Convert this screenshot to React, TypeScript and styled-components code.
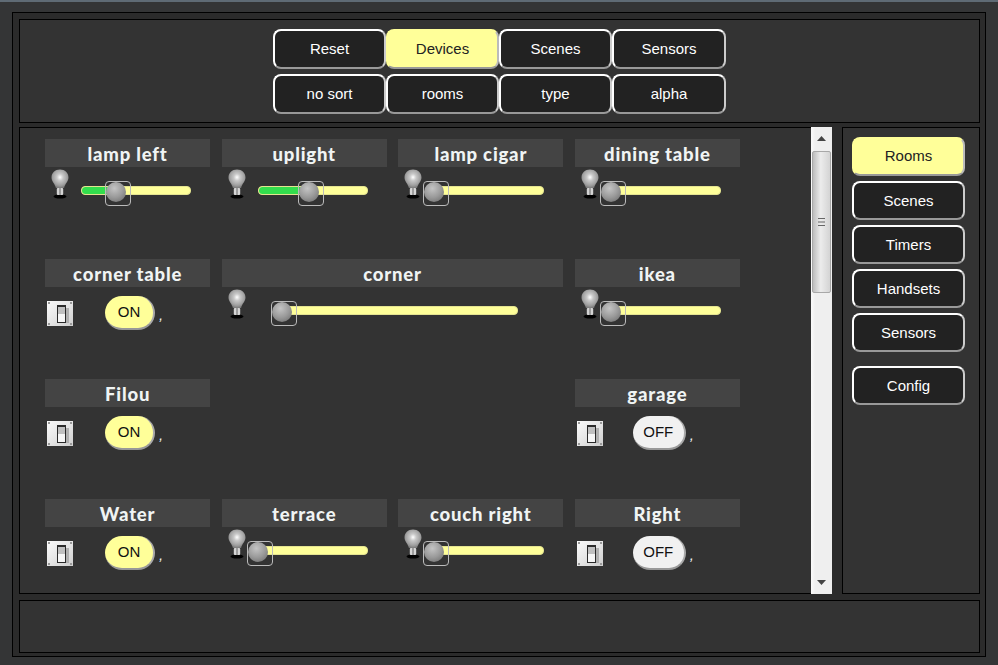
import React from "react";
import { createGlobalStyle, styled } from "styled-components";

const GlobalStyle = createGlobalStyle`
  html, body { margin: 0; padding: 0; background: #333; }
  * { box-sizing: border-box; }
`;

const Page = styled.div`
  width: 998px;
  height: 665px;
  padding: 10px 12px 0 12px;
  background: #343536;
  border-top: 2px solid #5f6b75;
  font-family: "Liberation Sans", Arial, sans-serif;
`;

const Frame = styled.div`
  width: 974px;
  height: 645px;
  padding: 6px 5px 3px 6px;
  background: #2b2b2b;
  border: 1px solid #000;
  display: flex;
  flex-direction: column;
`;

const Panel = styled.div`
  background: #333;
  border: 1px solid #000;
`;

const TopPanel = styled(Panel)`
  height: 104px;
  display: flex;
  justify-content: center;
  padding-top: 9px;
`;

const TopGrid = styled.div`
  display: grid;
  grid-template-columns: 113px 113px 113px 114px;
  grid-auto-rows: 40px;
  row-gap: 5px;
`;

const Btn = styled.button<{ $active?: boolean }>`
  display: block;
  height: 40px;
  padding: 0 0 ${(p) => (p.$active ? 2 : 0)}px 0;
  border-radius: 8px;
  border: 2px solid ${(p) => (p.$active ? "#ffff99" : "#fff")};
  border-bottom-color: #999;
  border-right-color: ${(p) => (p.$active ? "#bbb" : "#ccc")};
  background: ${(p) => (p.$active ? "#ffff99" : "#222")};
  color: ${(p) => (p.$active ? "#222" : "#fff")};
  font-family: "Liberation Sans", Arial, sans-serif;
  font-size: 15px;
`;

const TopBtn = styled(Btn)`
  padding-bottom: 2px;
`;

const Middle = styled.div`
  height: 467px;
  margin-top: 4px;
  display: flex;
  gap: 10px;
`;

const MainPanel = styled(Panel)`
  width: 813px;
  display: flex;
  border-right: none;
`;

const DeviceGrid = styled.div`
  flex: 1;
  padding: 11px 0 0 25px;
  display: grid;
  grid-template-columns: repeat(4, 165.25px);
  column-gap: 11.33px;
  grid-auto-rows: 120px;
`;

const Cell = styled.div<{ $span?: number }>`
  grid-column: span ${(p) => p.$span ?? 1};
`;

const Empty = styled.div`
  grid-column: span 2;
`;

const Label = styled.div`
  height: 28px;
  line-height: 30px;
  text-align: center;
  background: #444;
  color: #f0f4f4;
  font-family: "Comic Sans MS", "Lato", sans-serif;
  font-weight: 900;
  font-size: 18.5px;
  letter-spacing: 0.8px;
`;

const DimRow = styled.div`
  display: flex;
  padding: 2px 0 0 6px;
`;

const SliderBox = styled.div<{ $left: number; $width: number }>`
  position: relative;
  margin: 17px 0 0 ${(p) => p.$left}px;
  width: ${(p) => p.$width}px;
  height: 9px;
  border-radius: 4px;
  background: #ffff99;
  border: 1px solid #e4e490;
`;

const SliderFill = styled.div`
  height: 100%;
  border-radius: 4px 0 0 4px;
  background: #33dd4d;
`;

const Handle = styled.div`
  position: absolute;
  top: -6px;
  width: 26px;
  height: 25px;
  margin-left: -12px;
  border: 1px solid #bbb;
  border-radius: 4px;
  &::before {
    content: "";
    position: absolute;
    top: 0;
    left: 0;
    width: 20px;
    height: 20px;
    border-radius: 50%;
    background: radial-gradient(circle at 42% 32%, #c4c4c4 0%, #9a9a9a 50%, #666 100%);
  }
`;

const SwitchRow = styled.div`
  display: flex;
  align-items: flex-start;
  padding: 9px 0 0 2px;
`;

const SwitchIcon = styled.svg`
  margin-top: 5px;
  flex: none;
`;

const Pill = styled.div<{ $on: boolean }>`
  margin-left: ${(p) => (p.$on ? 32 : 30)}px;
  width: ${(p) => (p.$on ? 50 : 53)}px;
  height: 34px;
  line-height: 32px;
  text-align: center;
  border-radius: 17px;
  font-size: 15px;
  color: #111;
  background: ${(p) => (p.$on ? "#ffff99" : "#f1f1f1")};
  border-bottom: 2px solid #999;
  border-right: 2px solid #aaa;
`;

const Comma = styled.span`
  margin: 10px 0 0 4px;
  color: #eee;
  font-size: 15px;
  font-style: italic;
`;

const ScrollBar = styled.div`
  width: 21px;
  margin-top: -1px;
  margin-bottom: -1px;
  background: linear-gradient(to right, #fafafa, #efefef 20%);
  display: flex;
  flex-direction: column;
`;

const ArrowBox = styled.div<{ $top?: boolean }>`
  height: 24px;
  padding-bottom: ${(p) => (p.$top ? 2 : 0)}px;
  display: flex;
  align-items: center;
  justify-content: center;
`;

const Thumb = styled.div`
  width: 19px;
  height: 142px;
  margin-left: 1px;
  border: 1px solid #a8a8a8;
  border-radius: 2px;
  background: linear-gradient(to right, #bdbdbd, #ececec 45%, #d4d4d4);
  display: flex;
  align-items: center;
  justify-content: center;
`;

const ScrollGap = styled.div`
  flex: 1;
`;

const SidePanel = styled(Panel)`
  width: 138px;
  padding: 9px 0 0 9px;
  display: flex;
  flex-direction: column;
  gap: 5px;
`;

const SideBtn = styled(Btn)`
  width: 113px;
  height: 39px;
`;

const ConfigBtn = styled(SideBtn)`
  margin-top: 9px;
`;

const BottomPanel = styled(Panel)`
  height: 53px;
  margin-top: 6px;
`;

function Bulb() {
  return (
    <svg width="18" height="30" viewBox="0 0 18 30">
      <defs>
        <radialGradient id="bulbGlass" cx="50%" cy="42%" r="62%">
          <stop offset="0%" stopColor="#ffffff" />
          <stop offset="30%" stopColor="#c8c8c8" />
          <stop offset="70%" stopColor="#a0a0a0" />
          <stop offset="100%" stopColor="#707070" />
        </radialGradient>
      </defs>
      <ellipse cx="9" cy="27.5" rx="6.5" ry="2" fill="#000" />
      <path d="M9 .5C4 .5.5 4 .5 8.4c0 4 3.6 6.2 4.4 10.6h8.2c.8-4.4 4.4-6.6 4.4-10.6C17.5 4 14 .5 9 .5z" fill="url(#bulbGlass)" />
      <rect x="5.8" y="19" width="6.4" height="7" rx="1" fill="#d4d4d4" />
      <rect x="8.4" y="19" width="1.2" height="7" fill="#777" />
    </svg>
  );
}

function ToggleIcon() {
  return (
    <SwitchIcon width="26" height="25" viewBox="0 0 26 25">
      <defs>
        <linearGradient id="plate" x1="0" y1="0" x2="1" y2="1">
          <stop offset="0%" stopColor="#fbfbfb" />
          <stop offset="100%" stopColor="#cfcfcf" />
        </linearGradient>
      </defs>
      <rect width="26" height="25" fill="url(#plate)" />
      <rect x="1" y="1" width="2" height="2" fill="#999" />
      <rect x="23" y="1" width="2" height="2" fill="#999" />
      <rect x="1" y="22" width="2" height="2" fill="#999" />
      <rect x="23" y="22" width="2" height="2" fill="#999" />
      <rect x="19" y="7" width="3" height="15" fill="#b0b0b0" />
      <rect x="10" y="4" width="9" height="18" fill="#2a2a2a" />
      <rect x="11" y="6" width="7" height="7" fill="#c0c0c0" />
      <rect x="11" y="13" width="7" height="8" fill="#f6f6f6" />
    </SwitchIcon>
  );
}

type DimmerProps = { name: string; level: number; span?: number; left?: number; width?: number };

function Dimmer({ name, level, span, left = 12, width = 110 }: DimmerProps) {
  return (
    <Cell $span={span}>
      <Label>{name}</Label>
      <DimRow>
        <Bulb />
        <SliderBox $left={left} $width={width}>
          <SliderFill style={{ width: `${level}%` }} />
          <Handle style={{ left: `${level}%` }} />
        </SliderBox>
      </DimRow>
    </Cell>
  );
}

function Toggle({ name, on }: { name: string; on: boolean }) {
  return (
    <Cell>
      <Label>{name}</Label>
      <SwitchRow>
        <ToggleIcon />
        <Pill $on={on}>{on ? "ON" : "OFF"}</Pill>
        <Comma>,</Comma>
      </SwitchRow>
    </Cell>
  );
}

export default function App() {
  return (
    <Page>
      <GlobalStyle />
      <Frame>
        <TopPanel>
          <TopGrid>
            <TopBtn>Reset</TopBtn>
            <TopBtn $active>Devices</TopBtn>
            <TopBtn>Scenes</TopBtn>
            <TopBtn>Sensors</TopBtn>
            <TopBtn>no sort</TopBtn>
            <TopBtn>rooms</TopBtn>
            <TopBtn>type</TopBtn>
            <TopBtn>alpha</TopBtn>
          </TopGrid>
        </TopPanel>
        <Middle>
          <MainPanel>
            <DeviceGrid>
              <Dimmer name="lamp left" level={32.4} />
              <Dimmer name="uplight" level={48} />
              <Dimmer name="lamp cigar" level={0} />
              <Dimmer name="dining table" level={0} />
              <Toggle name="corner table" on />
              <Dimmer name="corner" level={0} span={2} left={36} width={236} />
              <Dimmer name="ikea" level={0} />
              <Toggle name="Filou" on />
              <Empty />
              <Toggle name="garage" on={false} />
              <Toggle name="Water" on />
              <Dimmer name="terrace" level={0} />
              <Dimmer name="couch right" level={0} />
              <Toggle name="Right" on={false} />
            </DeviceGrid>
            <ScrollBar>
              <ArrowBox $top>
                <svg width="9" height="5" viewBox="0 0 9 5">
                  <path d="M4.5 0L9 5H0z" fill="#444" />
                </svg>
              </ArrowBox>
              <Thumb>
                <svg width="9" height="10" viewBox="0 0 9 10">
                  <path d="M1 1.5h7M1 5h7M1 8.5h7" stroke="#666" strokeWidth="1" />
                </svg>
              </Thumb>
              <ScrollGap />
              <ArrowBox>
                <svg width="9" height="5" viewBox="0 0 9 5">
                  <path d="M0 0h9L4.5 5z" fill="#444" />
                </svg>
              </ArrowBox>
            </ScrollBar>
          </MainPanel>
          <SidePanel>
            <SideBtn $active>Rooms</SideBtn>
            <SideBtn>Scenes</SideBtn>
            <SideBtn>Timers</SideBtn>
            <SideBtn>Handsets</SideBtn>
            <SideBtn>Sensors</SideBtn>
            <ConfigBtn>Config</ConfigBtn>
          </SidePanel>
        </Middle>
        <BottomPanel />
      </Frame>
    </Page>
  );
}
